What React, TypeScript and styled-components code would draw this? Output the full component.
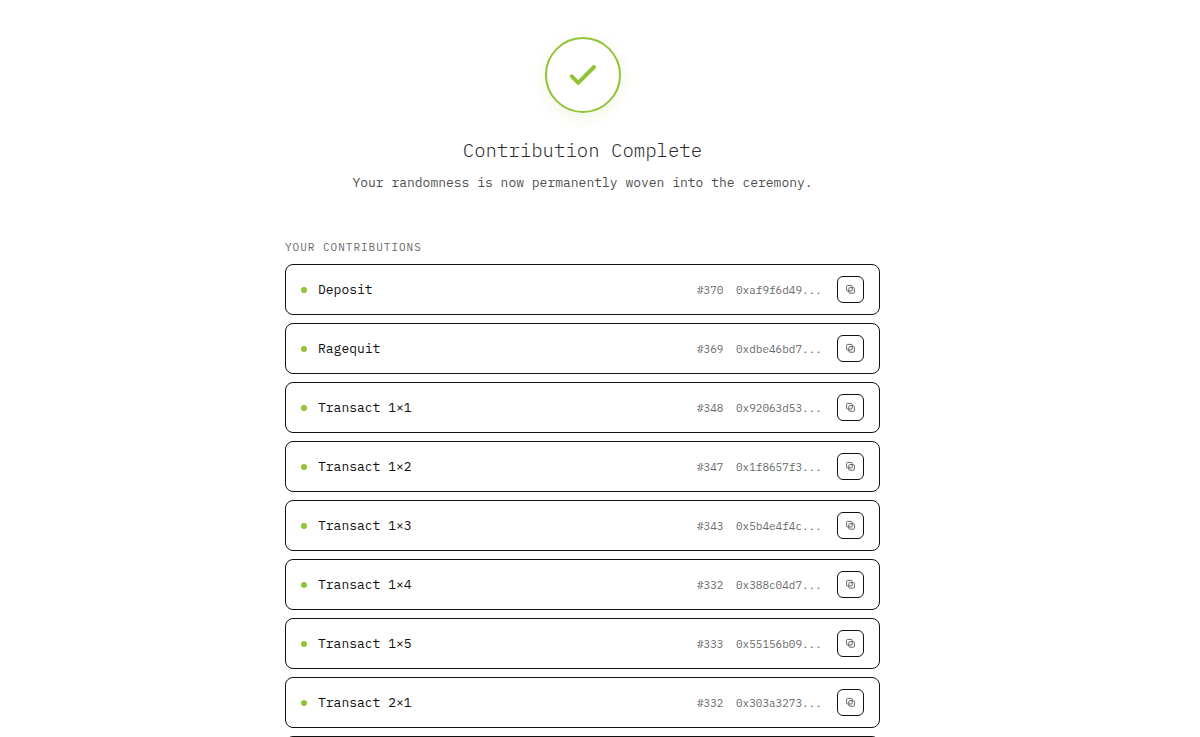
import React from "react";
import styled, { createGlobalStyle } from "styled-components";

const GlobalStyle = createGlobalStyle`
  *, *::before, *::after { box-sizing: border-box; }
  body {
    margin: 0;
    background: #ffffff;
    color: #0f0f0f;
    font-family: "IBM Plex Mono", "Liberation Mono", monospace;
  }
`;

const Page = styled.main`
  display: flex;
  flex-direction: column;
  align-items: center;
  padding: 37px 35px 37px 0;
`;

const Badge = styled.div`
  display: flex;
  align-items: center;
  justify-content: center;
  width: 76px;
  height: 76px;
  border: 2px solid #92c336;
  border-radius: 50%;
  color: #92c336;
  box-shadow: 0 4px 16px rgba(147, 197, 47, 0.15);
`;

const Title = styled.h1`
  margin: 23px 0 0;
  font-size: 19px;
  line-height: 28px;
  font-weight: 300;
  color: #2c2c2c;
`;

const Subtitle = styled.p`
  margin: 9px 0 0;
  font-size: 13px;
  line-height: 20px;
  color: #505050;
`;

const Section = styled.section`
  width: 100%;
  max-width: 595px;
  margin-top: 45px;
`;

const SectionLabel = styled.h2`
  margin: 0 0 8px;
  font-size: 11px;
  line-height: 18px;
  font-weight: 400;
  letter-spacing: 1px;
  text-transform: uppercase;
  color: #6b6b6b;
`;

const List = styled.ul`
  display: flex;
  flex-direction: column;
  gap: 8px;
  margin: 0;
  padding: 0;
  list-style: none;
`;

const Row = styled.li`
  display: flex;
  align-items: center;
  gap: 11px;
  padding: 11px 15px;
  border: 1px solid #111111;
  border-radius: 8px;
`;

const Dot = styled.span`
  width: 6px;
  height: 6px;
  border-radius: 50%;
  background: #92c336;
`;

const Name = styled.span`
  flex: 1;
  font-size: 13px;
  line-height: 20px;
`;

const Meta = styled.span<{ $width: number }>`
  min-width: ${(p) => p.$width}px;
  font-size: 11px;
  line-height: 18px;
  color: #6b6b6b;
`;

const CopyButton = styled.button`
  display: flex;
  align-items: center;
  justify-content: center;
  width: 27px;
  height: 27px;
  padding: 0;
  border: 1px solid #111111;
  border-radius: 6px;
  background: transparent;
  color: #666666;
  cursor: pointer;
`;

const contributions = [
  { name: "Deposit", index: 370, hash: "0xaf9f6d49" },
  { name: "Ragequit", index: 369, hash: "0xdbe46bd7" },
  { name: "Transact 1×1", index: 348, hash: "0x92063d53" },
  { name: "Transact 1×2", index: 347, hash: "0x1f8657f3" },
  { name: "Transact 1×3", index: 343, hash: "0x5b4e4f4c" },
  { name: "Transact 1×4", index: 332, hash: "0x388c04d7" },
  { name: "Transact 1×5", index: 333, hash: "0x55156b09" },
  { name: "Transact 2×1", index: 332, hash: "0x303a3273" },
  { name: "Transact 2×2", index: 331, hash: "0x7c20e9b4" },
];

const CheckIcon = () => (
  <svg width="30" height="30" viewBox="0 0 30 30" fill="none" aria-hidden="true">
    <path
      d="M3.8 16.4 L10.2 22.8 L26 7"
      stroke="currentColor"
      strokeWidth="4"
      strokeLinecap="round"
      strokeLinejoin="round"
    />
  </svg>
);

const CopyIcon = () => (
  <svg width="11" height="11" viewBox="0 0 11 11" fill="none" stroke="currentColor" aria-hidden="true">
    <rect x="1.6" y="1.4" width="5.6" height="5.6" rx="1" />
    <rect x="3.8" y="3.6" width="5.6" height="5.6" rx="1" />
  </svg>
);

export default function App() {
  return (
    <>
      <GlobalStyle />
      <Page>
        <Badge>
          <CheckIcon />
        </Badge>
        <Title>Contribution Complete</Title>
        <Subtitle>Your randomness is now permanently woven into the ceremony.</Subtitle>
        <Section aria-labelledby="contributions">
          <SectionLabel id="contributions">Your contributions</SectionLabel>
          <List>
            {contributions.map((c) => (
              <Row key={c.name}>
                <Dot />
                <Name>{c.name}</Name>
                <Meta $width={28}>#{c.index}</Meta>
                <Meta $width={90}>{c.hash}...</Meta>
                <CopyButton type="button" aria-label={`Copy ${c.name} hash`}>
                  <CopyIcon />
                </CopyButton>
              </Row>
            ))}
          </List>
        </Section>
      </Page>
    </>
  );
}
